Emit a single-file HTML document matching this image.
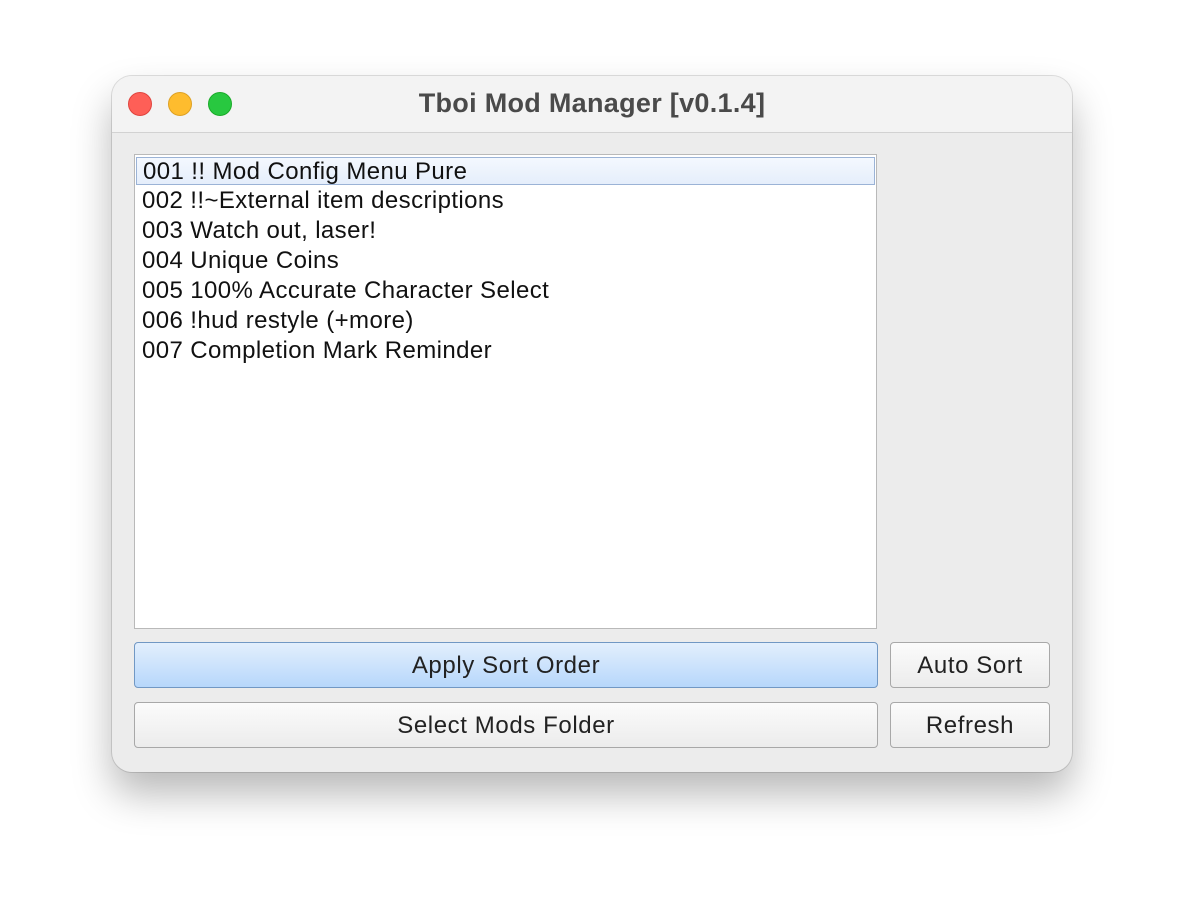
<!DOCTYPE html>
<html><head><meta charset="utf-8"><style>
body{margin:0;width:1184px;height:920px;background:#fff;position:relative;font-family:"Liberation Sans",sans-serif;overflow:hidden}
.win{position:absolute;left:112px;top:76px;width:960px;height:696px;background:#ececec;border-radius:20px;box-shadow:0 22px 40px rgba(0,0,0,0.28),0 0 0 1px rgba(0,0,0,0.12);overflow:hidden}
.title{height:56px;background:#f3f3f3;border-bottom:1px solid #d2d2d2;position:relative}
.title .t{position:absolute;left:0;right:0;top:12px;text-align:center;font-weight:bold;font-size:27px;letter-spacing:0.3px;color:#4a4a4a}
.dot{position:absolute;top:16px;width:24px;height:24px;border-radius:50%}
.list{position:absolute;left:22px;top:78px;width:741px;height:473px;background:#fff;border:1px solid #b9b9b9}
.row{height:30px;line-height:32px;font-size:24px;letter-spacing:0.4px;color:#111;padding-left:7px;box-sizing:border-box}
.sel{margin:2px 1px 0 1px;height:28px;line-height:28px;background:linear-gradient(#f4f8fe,#e5eefb);border:1px solid #9bb3d6;padding-left:6px}
.btn{position:absolute;height:46px;box-sizing:border-box;border:1px solid #a8a8a8;border-radius:4px;background:linear-gradient(#fbfbfb,#ececec);text-align:center;line-height:46px;font-size:24px;letter-spacing:0.6px;color:#222}
.blue{background:linear-gradient(#e3effd,#b7d7fb);border-color:#7198c4}
</style></head><body>
<div class="win">
<div class="title">
<div class="dot" style="left:16px;background:#fe5f57;border:1px solid #e0443e;box-sizing:border-box"></div>
<div class="dot" style="left:56px;background:#febc2e;border:1px solid #dea123;box-sizing:border-box"></div>
<div class="dot" style="left:96px;background:#28c840;border:1px solid #1aab29;box-sizing:border-box"></div>
<div class="t">Tboi Mod Manager [v0.1.4]</div>
</div>
<div class="list">
<div class="row sel">001 !! Mod Config Menu Pure</div>
<div class="row">002 !!~External item descriptions</div>
<div class="row">003 Watch out, laser!</div>
<div class="row">004 Unique Coins</div>
<div class="row">005 100% Accurate Character Select</div>
<div class="row">006 !hud restyle (+more)</div>
<div class="row">007 Completion Mark Reminder</div>
</div>
<div class="btn blue" style="left:22px;top:566px;width:744px">Apply Sort Order</div>
<div class="btn" style="left:778px;top:566px;width:160px">Auto Sort</div>
<div class="btn" style="left:22px;top:626px;width:744px">Select Mods Folder</div>
<div class="btn" style="left:778px;top:626px;width:160px">Refresh</div>
</div>
</body></html>
